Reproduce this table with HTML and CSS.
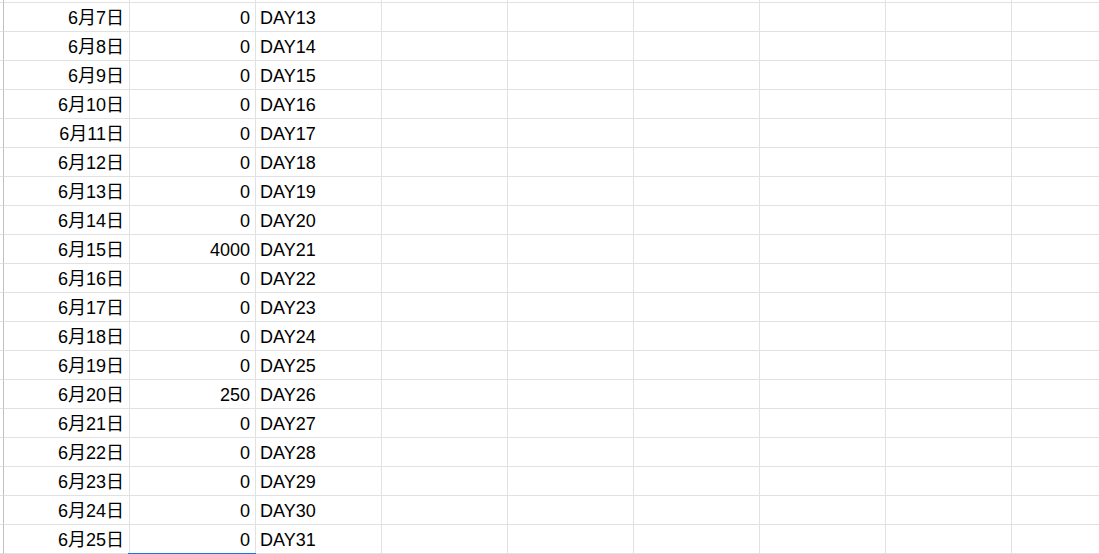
FILE: index.html
```html
<!DOCTYPE html>
<html lang="ja">
<head>
<meta charset="utf-8">
<title>Sheet</title>
<link rel="stylesheet" href="styles.css">
</head>
<body>
<div class="sheet">
  <div class="rh top"></div><div class="c top"></div><div class="c top"></div><div class="c top"></div><div class="c top"></div><div class="c top"></div><div class="c top"></div><div class="c top"></div><div class="c top"></div><div class="c top"></div>

  <div class="rh"></div><div class="c num">6月7日</div><div class="c num">0</div><div class="c txt">DAY13</div><div class="c"></div><div class="c"></div><div class="c"></div><div class="c"></div><div class="c"></div><div class="c"></div>
  <div class="rh"></div><div class="c num">6月8日</div><div class="c num">0</div><div class="c txt">DAY14</div><div class="c"></div><div class="c"></div><div class="c"></div><div class="c"></div><div class="c"></div><div class="c"></div>
  <div class="rh"></div><div class="c num">6月9日</div><div class="c num">0</div><div class="c txt">DAY15</div><div class="c"></div><div class="c"></div><div class="c"></div><div class="c"></div><div class="c"></div><div class="c"></div>
  <div class="rh"></div><div class="c num">6月10日</div><div class="c num">0</div><div class="c txt">DAY16</div><div class="c"></div><div class="c"></div><div class="c"></div><div class="c"></div><div class="c"></div><div class="c"></div>
  <div class="rh"></div><div class="c num">6月11日</div><div class="c num">0</div><div class="c txt">DAY17</div><div class="c"></div><div class="c"></div><div class="c"></div><div class="c"></div><div class="c"></div><div class="c"></div>
  <div class="rh"></div><div class="c num">6月12日</div><div class="c num">0</div><div class="c txt">DAY18</div><div class="c"></div><div class="c"></div><div class="c"></div><div class="c"></div><div class="c"></div><div class="c"></div>
  <div class="rh"></div><div class="c num">6月13日</div><div class="c num">0</div><div class="c txt">DAY19</div><div class="c"></div><div class="c"></div><div class="c"></div><div class="c"></div><div class="c"></div><div class="c"></div>
  <div class="rh"></div><div class="c num">6月14日</div><div class="c num">0</div><div class="c txt">DAY20</div><div class="c"></div><div class="c"></div><div class="c"></div><div class="c"></div><div class="c"></div><div class="c"></div>
  <div class="rh"></div><div class="c num">6月15日</div><div class="c num">4000</div><div class="c txt">DAY21</div><div class="c"></div><div class="c"></div><div class="c"></div><div class="c"></div><div class="c"></div><div class="c"></div>
  <div class="rh"></div><div class="c num">6月16日</div><div class="c num">0</div><div class="c txt">DAY22</div><div class="c"></div><div class="c"></div><div class="c"></div><div class="c"></div><div class="c"></div><div class="c"></div>
  <div class="rh"></div><div class="c num">6月17日</div><div class="c num">0</div><div class="c txt">DAY23</div><div class="c"></div><div class="c"></div><div class="c"></div><div class="c"></div><div class="c"></div><div class="c"></div>
  <div class="rh"></div><div class="c num">6月18日</div><div class="c num">0</div><div class="c txt">DAY24</div><div class="c"></div><div class="c"></div><div class="c"></div><div class="c"></div><div class="c"></div><div class="c"></div>
  <div class="rh"></div><div class="c num">6月19日</div><div class="c num">0</div><div class="c txt">DAY25</div><div class="c"></div><div class="c"></div><div class="c"></div><div class="c"></div><div class="c"></div><div class="c"></div>
  <div class="rh"></div><div class="c num">6月20日</div><div class="c num">250</div><div class="c txt">DAY26</div><div class="c"></div><div class="c"></div><div class="c"></div><div class="c"></div><div class="c"></div><div class="c"></div>
  <div class="rh"></div><div class="c num">6月21日</div><div class="c num">0</div><div class="c txt">DAY27</div><div class="c"></div><div class="c"></div><div class="c"></div><div class="c"></div><div class="c"></div><div class="c"></div>
  <div class="rh"></div><div class="c num">6月22日</div><div class="c num">0</div><div class="c txt">DAY28</div><div class="c"></div><div class="c"></div><div class="c"></div><div class="c"></div><div class="c"></div><div class="c"></div>
  <div class="rh"></div><div class="c num">6月23日</div><div class="c num">0</div><div class="c txt">DAY29</div><div class="c"></div><div class="c"></div><div class="c"></div><div class="c"></div><div class="c"></div><div class="c"></div>
  <div class="rh"></div><div class="c num">6月24日</div><div class="c num">0</div><div class="c txt">DAY30</div><div class="c"></div><div class="c"></div><div class="c"></div><div class="c"></div><div class="c"></div><div class="c"></div>
  <div class="rh"></div><div class="c num">6月25日</div><div class="c num sel-below">0</div><div class="c txt">DAY31</div><div class="c"></div><div class="c"></div><div class="c"></div><div class="c"></div><div class="c"></div><div class="c"></div>
</div>
</body>
</html>
```
FILE: styles.css
```css
html, body {
  margin: 0;
  padding: 0;
  background: #ffffff;
  overflow: hidden;
}

.sheet {
  display: grid;
  grid-template-columns: 4px repeat(9, 126px);
  grid-template-rows: 3px repeat(19, 29px);
  font-family: "Liberation Sans", Arial, "Noto Sans CJK JP", sans-serif;
  font-size: 18px;
  line-height: 21px;
  color: #000000;
}

.rh {
  border-right: 1px solid #c0c0c0;
  border-bottom: 1px solid #e1e1e1;
}

.c {
  position: relative;
  display: flex;
  align-items: flex-end;
  padding: 0 3px 2px 3px;
  border-right: 1px solid #e1e1e1;
  border-bottom: 1px solid #e1e1e1;
  white-space: nowrap;
  overflow: hidden;
}

.top {
  padding: 0;
}

.num {
  justify-content: flex-end;
  padding-right: 5px;
}

.txt {
  justify-content: flex-start;
  padding-left: 4px;
}

.sel-below {
  overflow: visible;
}

.sel-below::after {
  content: "";
  position: absolute;
  left: -2px;
  right: -1px;
  bottom: -1px;
  height: 1px;
  background: #1a73e8;
}
```
